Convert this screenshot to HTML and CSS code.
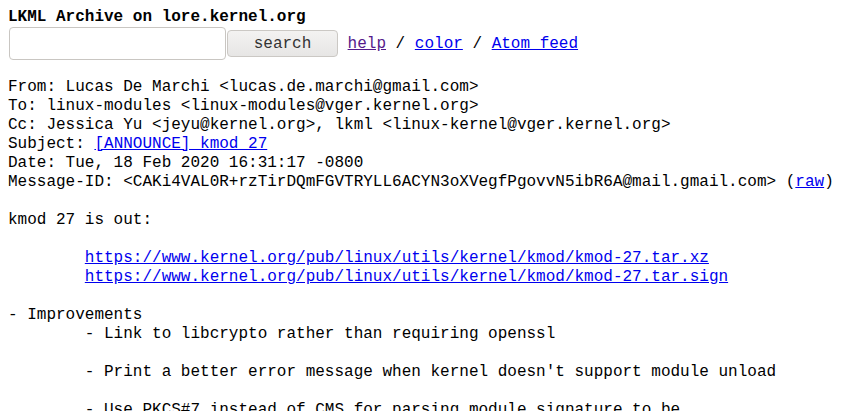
FILE: index.html
```html
<!DOCTYPE html>
<html>
<head>
<meta charset="utf-8">
<title>[ANNOUNCE] kmod 27 - LKML Archive</title>
<link rel="stylesheet" href="styles.css">
</head>
<body>
<form class="top">
<div class="title"><b>LKML Archive on lore.kernel.org</b></div>
<div class="searchrow">
<input class="q" name="q" type="text"><button class="btn" type="button">search</button><span class="nav"> <a class="visited" href="#">help</a> / <a href="#">color</a> / <a href="#">Atom feed</a></span>
</div>
</form>
<pre class="msg">From: Lucas De Marchi &lt;lucas.de.marchi@gmail.com&gt;
To: linux-modules &lt;linux-modules@vger.kernel.org&gt;
Cc: Jessica Yu &lt;jeyu@kernel.org&gt;, lkml &lt;linux-kernel@vger.kernel.org&gt;
Subject: <a href="#">[ANNOUNCE] kmod 27</a>
Date: Tue, 18 Feb 2020 16:31:17 -0800
Message-ID: &lt;CAKi4VAL0R+rzTirDQmFGVTRYLL6ACYN3oXVegfPgovvN5ibR6A@mail.gmail.com&gt; (<a href="#">raw</a>)

kmod 27 is out:

	<a href="#">https://www.kernel.org/pub/linux/utils/kernel/kmod/kmod-27.tar.xz</a>
	<a href="#">https://www.kernel.org/pub/linux/utils/kernel/kmod/kmod-27.tar.sign</a>

- Improvements
	- Link to libcrypto rather than requiring openssl

	- Print a better error message when kernel doesn't support module unload

	- Use PKCS#7 instead of CMS for parsing module signature to be
	  more compatible with older openssl versions
</pre>
</body>
</html>
```
FILE: styles.css
```css
html, body {
  background: #fff;
  color: #000;
}
body {
  margin: 8px;
  font-family: "Liberation Mono", monospace;
  font-size: 16px;
  line-height: 19px;
}
a { color: #0000ee; }
a.visited { color: #551a8b; }
.top { margin: 0; }
.title {
  white-space: pre;
  height: 19px;
}
.searchrow {
  display: flex;
  align-items: center;
  height: 33px;
  white-space: pre;
}
.nav {
  padding-top: 2px;
}
.q {
  box-sizing: border-box;
  width: 217px;
  height: 33px;
  margin: 0 0 0 1px;
  padding: 0 6px;
  border: 1px solid #c9c6c2;
  border-radius: 4px;
  background: #fff;
  font: 16px "Liberation Mono", monospace;
}
.btn {
  box-sizing: border-box;
  width: 111px;
  height: 27px;
  margin: 0 0 0 1px;
  padding: 0;
  border: 1px solid #cbc8c4;
  border-radius: 4px;
  background: linear-gradient(#f3f2f1, #e7e6e5);
  color: #333;
  font: 16px "Liberation Mono", monospace;
}
.msg {
  margin: 18px 0 0 0;
  font-family: "Liberation Mono", monospace;
  font-size: 16px;
  line-height: 19px;
  tab-size: 8;
}
```
